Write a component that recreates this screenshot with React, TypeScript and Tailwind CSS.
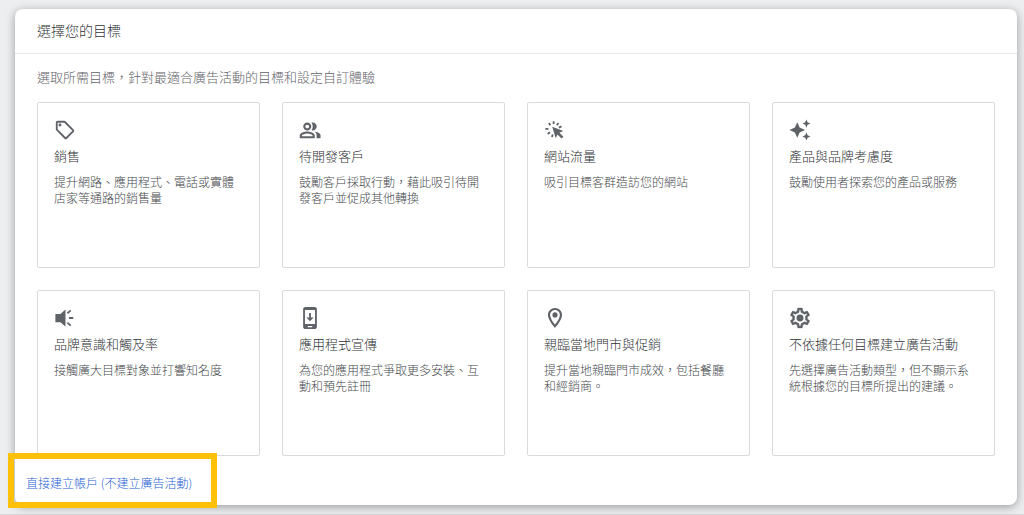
import type { ReactNode } from "react";

type Goal = { title: string; text: string; icon: ReactNode };

function Icon({ children }: { children: ReactNode }) {
  return (
    <svg viewBox="0 0 24 24" className="size-[22px] fill-[#5f6368]" aria-hidden="true">
      {children}
    </svg>
  );
}

const goals: Goal[] = [
  {
    title: "銷售",
    text: "提升網路、應用程式、電話或實體店家等通路的銷售量",
    icon: (
      <>
        <path d="M21.41 11.41l-8.83-8.83c-.37-.37-.88-.58-1.41-.58H4c-1.1 0-2 .9-2 2v7.17c0 .53.21 1.04.59 1.41l8.83 8.83c.78.78 2.05.78 2.83 0l7.17-7.17c.78-.78.78-2.04-.01-2.83zM12.83 20L4 11.17V4h7.17L20 12.83 12.83 20z" />
        <circle cx="6.5" cy="6.5" r="1.6" />
      </>
    ),
  },
  {
    title: "待開發客戶",
    text: "鼓勵客戶採取行動，藉此吸引待開發客戶並促成其他轉換",
    icon: (
      <>
        <path
          fillRule="evenodd"
          d="M9 12.500c2.500 0 4.400-1.900 4.400-4.300S11.500 3.900 9 3.900 4.600 5.800 4.600 8.200s1.900 4.300 4.400 4.300zm0-6.300c1.200 0 2.100.9 2.100 2s-.9 2-2.100 2-2.100-.9-2.100-2 .9-2 2.100-2zM9 13.500c-2.700 0-8.200 1.300-8.200 4.200V21h16.400v-3.300c0-2.900-5.500-4.200-8.200-4.200zm5.900 5.200H3.100v-.8c.4-.8 3.300-2.100 5.900-2.100s5.500 1.300 5.900 2.100z"
        />
        <path d="M15 12.500c2.400 0 4.300-1.900 4.300-4.300S17.400 3.900 15 3.900c-.5 0-1 .1-1.400.2.9 1.200 1.400 2.600 1.400 4.100s-.5 2.900-1.400 4.100c.4.1.9.2 1.400.2zM16.700 13.600c1.500 1 2.500 2.300 2.500 4.100V21h4.300v-3.300c0-2.400-3.900-3.700-6.800-4.100z" />
      </>
    ),
  },
  {
    title: "網站流量",
    text: "吸引目標客群造訪您的網站",
    icon: (
      <>
        <path d="M9 8.500l12 4.500-4.200 1.900 4.400 4.400-2.100 2.100-4.400-4.400L12.800 21z" />
        <path
          className="fill-none stroke-[#5f6368] stroke-2"
          d="M10.500 2.500v3M5.300 4.500l1.700 2.300M15.800 4.400l-1.800 2.400M1.500 10.700h3.300M16.200 9.400l2.900-1.300M4 16.300l2.500-1.900M8.800 19.800l.6-3"
        />
      </>
    ),
  },
  {
    title: "產品與品牌考慮度",
    text: "鼓勵使用者探索您的產品或服務",
    icon: (
      <path d="M9 3.500l2.600 5.900L17.500 12l-5.900 2.600L9 20.500l-2.600-5.900L.5 12l5.900-2.600zM19 .5l1.300 3.100L23.400 5l-3.100 1.400L19 9.500l-1.300-3.100L14.600 5l3.100-1.400zM19 14.500l1.300 3.100 3.100 1.400-3.100 1.400-1.300 3.100-1.300-3.100-3.100-1.400 3.100-1.400z" />
    ),
  },
  {
    title: "品牌意識和觸及率",
    text: "接觸廣大目標對象並打響知名度",
    icon: (
      <>
        <path d="M1.500 7.500h5.500l5.500-4.700v18.400L7 16.500H1.500z" />
        <path
          className="fill-none stroke-[#5f6368] stroke-2"
          d="M14.600 6.900l3.600-3.200M16.300 12H21M14.600 17.100l3.600 3.200"
        />
      </>
    ),
  },
  {
    title: "應用程式宣傳",
    text: "為您的應用程式爭取更多安裝、互動和預先註冊",
    icon: (
      <>
        <path
          fillRule="evenodd"
          d="M17 0H7C5.700 0 4.500 1 4.500 2.300v19.400C4.500 23 5.700 24 7 24h10c1.300 0 2.500-1 2.500-2.300V2.300C19.500 1 18.300 0 17 0zM6.500 3.300h11v15.200h-11zM9.500 20.800h5v1.200h-5z"
        />
        <path d="M11 6.500h2v5h3L12 15.500l-4-4h3z" />
      </>
    ),
  },
  {
    title: "親臨當地門市與促銷",
    text: "提升當地親臨門市成效，包括餐廳和經銷商。",
    icon: (
      <>
        <path d="M12 1C7.700 1 4.300 4.400 4.300 8.600 4.300 14.200 12 22.700 12 22.700s7.700-8.500 7.700-14.100C19.700 4.400 16.300 1 12 1zm0 2.300c3 0 5.300 2.400 5.300 5.300 0 3.100-3 7.600-5.300 10.500-2.300-2.900-5.300-7.400-5.300-10.500C6.700 5.700 9 3.300 12 3.300z" />
        <circle cx="12" cy="8.600" r="2.800" />
      </>
    ),
  },
  {
    title: "不依據任何目標建立廣告活動",
    text: "先選擇廣告活動類型，但不顯示系統根據您的目標所提出的建議。",
    icon: (
      <>
        <path
          className="stroke-[#5f6368] stroke-[0.4]"
          transform="translate(-1 -1) scale(1.083)"
          d="M19.430 12.980c.04-.32.07-.64.07-.98 0-.34-.03-.66-.07-.98l2.110-1.650c.19-.15.24-.42.12-.64l-2-3.460c-.09-.16-.26-.25-.44-.25-.06 0-.12.01-.17.03l-2.490 1c-.52-.4-1.080-.73-1.690-.98l-.38-2.650C14.460 2.180 14.250 2 14 2h-4c-.25 0-.46.18-.49.42l-.38 2.650c-.61.25-1.170.59-1.690.98l-2.490-1c-.06-.02-.12-.03-.18-.03-.17 0-.34.09-.43.25l-2 3.460c-.13.22-.07.49.12.64l2.110 1.650c-.04.32-.07.65-.07.98 0 .33.03.66.07.98l-2.110 1.650c-.19.15-.24.42-.12.64l2 3.460c.09.16.26.25.44.25.06 0 .12-.01.17-.03l2.490-1c.52.4 1.080.73 1.690.98l.38 2.650c.03.24.24.42.49.42h4c.25 0 .46-.18.49-.42l.38-2.650c.61-.25 1.170-.59 1.690-.98l2.490 1c.06.02.12.03.18.03.17 0 .34-.09.43-.25l2-3.460c.12-.22.07-.49-.12-.64l-2.110-1.650zm-1.980-1.710c.04.31.05.52.05.73 0 .21-.02.43-.05.73l-.14 1.130.89.7 1.080.84-.7 1.210-1.270-.51-1.040-.42-.9.68c-.43.32-.84.56-1.250.73l-1.060.43-.16 1.130-.2 1.350h-1.400l-.19-1.350-.16-1.130-1.060-.43c-.43-.18-.83-.41-1.230-.71l-.91-.7-1.060.43-1.270.51-.7-1.210 1.080-.84.89-.7-.14-1.130c-.03-.31-.05-.54-.05-.74s.02-.43.05-.73l.14-1.130-.89-.7-1.080-.84.7-1.210 1.270.51 1.040.42.9-.68c.43-.32.84-.56 1.250-.73l1.060-.43.16-1.130.2-1.350h1.390l.19 1.350.16 1.130 1.060.43c.43.18.83.41 1.230.71l.91.7 1.060-.43 1.270-.51.7 1.210-1.070.85-.89.7.14 1.130z"
        />
        <circle cx="12" cy="12" r="3.800" />
      </>
    ),
  },
];

function GoalCard({ title, text, icon }: Goal) {
  return (
    <button
      type="button"
      className="flex min-h-[166px] flex-col items-start rounded-xs border border-[#d8dade] bg-white px-4 pt-4 text-left"
    >
      <Icon>{icon}</Icon>
      <span className="mt-[5px] text-[13px] leading-5 text-[#303336]">{title}</span>
      <span className="mt-2 text-xs leading-4 text-[#46494d]">{text}</span>
    </button>
  );
}

export default function App() {
  return (
    <div
      lang="zh-TW"
      className="min-h-screen border-b border-[#d5d7d9] bg-[#eceef0] pt-[9px] pr-[7px] pb-[9px] pl-[15px] font-['Noto_Sans_CJK_TC',sans-serif] font-light"
    >
      <main className="rounded-lg bg-white shadow-[0_2px_10px_rgba(0,0,0,0.35)]">
        <header className="border-b border-[#e4e6e8] px-[22px] pt-[11px] pb-[13px]">
          <h1 className="text-sm leading-5 text-[#303336]">選擇您的目標</h1>
        </header>
        <section className="px-[22px] pt-[13px]">
          <p className="text-[13px] leading-5 text-[#5f6368]">
            選取所需目標，針對最適合廣告活動的目標和設定自訂體驗
          </p>
          <div className="mt-[15px] grid grid-cols-4 gap-[22px]">
            {goals.map((goal) => (
              <GoalCard key={goal.title} {...goal} />
            ))}
          </div>
        </section>
        <footer className="flex px-[11px] pt-[19px] pb-[14px]">
          <a href="#create-account" className="relative text-xs leading-4 text-[#2a5fd4]">
            直接建立帳戶 (不建立廣告活動)
            <span className="pointer-events-none absolute -top-[22px] -right-[25px] -bottom-[17px] -left-[18px] border-6 border-[#ffc107]" />
          </a>
        </footer>
      </main>
    </div>
  );
}
